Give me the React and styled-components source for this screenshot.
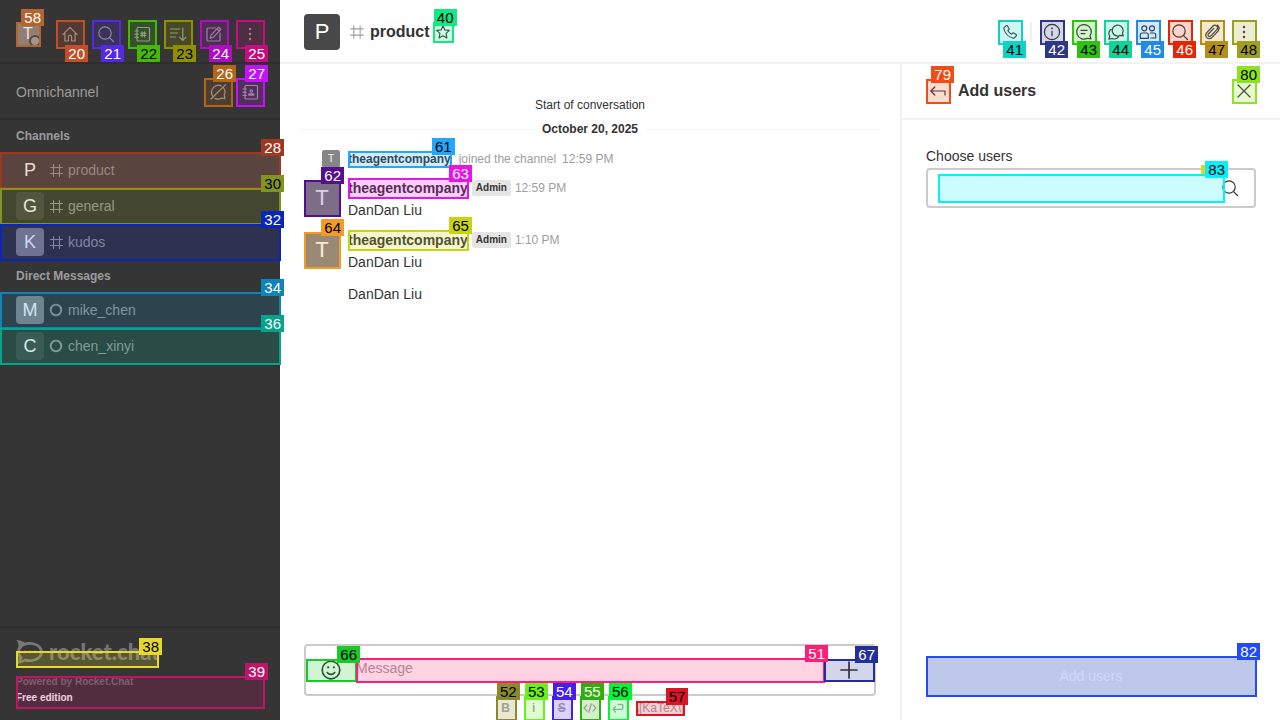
import React from "react";
import styled, { createGlobalStyle, css } from "styled-components";

const GlobalStyle = createGlobalStyle`
  *, *::before, *::after { box-sizing: border-box; }
  html, body { margin: 0; padding: 0; }
  body {
    font-family: "Liberation Sans", Arial, sans-serif;
    font-size: 14px;
    line-height: 20px;
    color: #333;
    background: #fff;
  }
  button, input, textarea { font: inherit; color: inherit; }
  h1, h2, h3, p, ul { margin: 0; padding: 0; font: inherit; }
  ul { list-style: none; }
  a { color: inherit; text-decoration: none; }
`;

/* ---------- numbered element highlights ---------- */

const Outline = styled.span`
  position: absolute;
  inset: 0 -1px -1px 0;
  border: 2px solid ${(p) => p.$color};
  pointer-events: none;
  &::before {
    content: "";
    position: absolute;
    inset: 0;
    background: ${(p) => p.$color};
    opacity: 0.2;
  }
`;

const Tag = styled.span`
  position: absolute;
  z-index: 2;
  right: -4px;
  top: ${(p) => (p.$below ? "calc(100% - 3px)" : "-13px")};
  height: 17px;
  padding: 0 3px;
  background: ${(p) => p.$color};
  color: ${(p) => (p.$dark ? "#000" : "#fff")};
  font: 400 15px/17px "Liberation Sans", Arial, sans-serif;
  white-space: nowrap;
  pointer-events: none;
`;

const MARKS = {
  58: ["#b5632f"], 20: ["#c34f2a"], 21: ["#5429e6"], 22: ["#46b80a", 1],
  23: ["#908f00", 1], 24: ["#ae0ec2"], 25: ["#c40d80"], 26: ["#b3661a"],
  27: ["#c512f8"], 28: ["#a0371f"], 30: ["#83931f", 1], 32: ["#0a26b8"],
  34: ["#1083b8"], 36: ["#04a58a"], 38: ["#e8d82c", 1], 39: ["#bf1468"],
  40: ["#10ea85", 1], 41: ["#10d2c4", 1], 42: ["#2e3784"], 43: ["#2cc311", 1],
  44: ["#10d49c", 1], 45: ["#218ae6"], 46: ["#e42606"], 47: ["#b58e1a", 1],
  48: ["#9e9e22", 1], 51: ["#fd1f77"], 52: ["#8a8a2c", 1], 53: ["#6aef1f", 1],
  54: ["#4420ea"], 55: ["#2faf0c"], 56: ["#05f531", 1], 57: ["#db1426", 1],
  61: ["#24a7fb", 1], 62: ["#560f8c"], 63: ["#e912ea"], 64: ["#f29b27", 1],
  65: ["#c7d412", 1], 66: ["#18cc28", 1], 67: ["#222f9a"], 79: ["#f04c15"],
  80: ["#8ce321", 1], 82: ["#204bfc"], 83: ["#02f2fb", 1],
};

function Mark({ n, below }) {
  const [color, dark] = MARKS[n];
  return (
    <>
      <Outline $color={color} />
      <Tag $color={color} $dark={dark} $below={below} aria-hidden="true">{n}</Tag>
    </>
  );
}

/* ---------- icons ---------- */

const Svg = styled.svg`
  display: block;
  flex: none;
  width: ${(p) => p.$size}px;
  height: ${(p) => p.$size}px;
  fill: none;
  stroke: currentColor;
  stroke-width: ${(p) => p.$weight || 1.2};
  stroke-linecap: round;
  stroke-linejoin: round;
  .solid { fill: currentColor; stroke: none; }
`;

const SHAPES = {
  home: <path d="M2.800 10.600 10 3.400l7.200 7.200M4.900 9.200V17h3.500v-4.200a1.600 1.600 0 0 1 3.200 0V17h3.500V9.200" />,
  search: <><circle cx="9" cy="9" r="6.2" /><path d="m13.6 13.6 3.9 3.9" /></>,
  directory: <><rect x="5" y="3.5" width="12.5" height="13.5" rx="1" /><path d="M3 7h3.4M3 10.2h3.4M3 13.4h3.4M10.1 7.8v5M12.5 7.8v5M8.8 9.2h5M8.8 11.4h5" /></>,
  sort: <path d="M2.4 5h9.2M2.4 9h7M2.4 13h5M14.8 4v12.4M11.8 13.4l3 3 3-3" />,
  edit: <path d="M11.5 4H4a1 1 0 0 0-1 1v11a1 1 0 0 0 1 1h11a1 1 0 0 0 1-1V9M14.6 3.2l2.4 2.2-7.8 8-3 .9.8-3.1z M13 4.8l2.4 2.3" />,
  kebab: <><circle className="solid" cx="10" cy="5" r="1.2" /><circle className="solid" cx="10" cy="10" r="1.2" /><circle className="solid" cx="10" cy="15" r="1.2" /></>,
  chatOff: <path d="M17.6 2.6 3 17M4.6 14A7 7 0 0 1 13.5 4M15.6 6a7 7 0 0 1 .6 7.2l.7 3.4-3-.6A7 7 0 0 1 7 16.4" />,
  contacts: <><rect x="5" y="3.5" width="12.5" height="13.5" rx="1" /><path d="M3 7h3.4M3 10.2h3.4M3 13.4h3.4M8.8 13.2v-1.400h5v1.400z" /><circle cx="11.3" cy="9" r="1.2" /></>,
  hash: <path d="M6.5 3v14M13.5 3v14M3 6.5h14M3 13.5h14" />,
  offline: <circle cx="10" cy="10" r="7.6" />,
  star: <path d="m10 2.2 2.300 5.200 5.700.6-4.200 3.800 1.100 5.600L10 14.600l-4.900 2.800 1.100-5.600L2 8l5.700-.6z" />,
  phone: <path d="M3.600 4.800 5.800 3c.5-.4 1-.2 1.300.3l1.800 2.900c.3.5.1 1-.3 1.300l-1 .8c.8 1.700 2.300 3.200 4.200 4.100l.8-1c.3-.4.8-.5 1.300-.3l2.900 1.700c.5.3.6.9.3 1.300l-1.800 2.200c-.4.500-.9.700-1.500.6C8.600 15.800 4.200 11.600 3.200 6.200c-.1-.5 0-1 .4-1.400z" />,
  info: <><circle cx="10" cy="10" r="7.600" /><path d="M10 9v5" /><circle className="solid" cx="10" cy="6.300" r=".9" /></>,
  thread: <><path d="M16 13.600l1 3.400-3.600-.7A7.300 7.300 0 1 1 17.300 10c0 1.300-.4 2.500-1.300 3.600z" /><path d="M7 8.400h6M7 11.600h4" /></>,
  discussion: <path d="M16.300 11.300l1 2.700-3-.6A5.500 5.500 0 1 1 17.200 8.700c0 1-.3 1.800-.9 2.600zM5 7.300a5.500 5.500 0 0 0-1.300 6.900L3 17.200l3.200-.7a5.500 5.500 0 0 0 6.300-1.600" />,
  team: <><circle cx="6.300" cy="6.300" r="2.500" /><circle cx="14" cy="6.300" r="2.500" /><path d="M2.300 16.300v-3.300c0-1.100.9-2 2-2h4c1.100 0 2 .9 2 2v3.300zM12.300 11h3.400c1.100 0 2 .9 2 2v3h-4.800" /></>,
  clip: <path d="M16.300 8.800 9.800 15.700a3.500 3.500 0 0 1-5-5L11 4a2.600 2.600 0 0 1 3.800 3.600l-6.200 6.500a1.500 1.500 0 0 1-2.200-2.100l5.400-5.700M16.300 8.800 17.400 5.800 15.500 3" />,
  back: <path d="M6.800 6 2.800 10l4 4M3 10h14v4" />,
  cross: <path d="m4 4 12 12M16 4 4 16" />,
  smile: <><circle cx="10" cy="10" r="8" /><path d="M6.600 12.300c1.700 2.300 5.100 2.300 6.800 0" /><circle className="solid" cx="7.400" cy="7.600" r="1" /><circle className="solid" cx="12.600" cy="7.600" r="1" /></>,
  plus: <path d="M10 2v16M2 10h16" />,
  code: <path d="m5.600 5.600-4 4.400 4 4.400M14.400 5.600l4 4.400-4 4.400M11.800 4 8.200 16" />,
  enter: <path d="M6.500 8.300 2.700 12l3.800 3.700M3 12h12.500a1.500 1.500 0 0 0 1.500-1.500V6.500a1.500 1.500 0 0 0-1.500-1.500H10" />,
};

function Icon({ name, size = 20, weight }) {
  return (
    <Svg viewBox="0 0 20 20" $size={size} $weight={weight} aria-hidden="true">
      {SHAPES[name]}
    </Svg>
  );
}

/* ---------- shared parts ---------- */

const IconButton = styled.button`
  position: relative;
  display: flex;
  align-items: center;
  justify-content: center;
  flex: none;
  width: ${(p) => p.$size || 24}px;
  height: ${(p) => p.$size || 24}px;
  padding: 0;
  border: 0;
  background: none;
`;

const AVATAR = {
  18: css`font-size: 10px;`,
  24: css`font-size: 16px;`,
  28: css`font-size: 18px;`,
  36: css`font-size: 22px;`,
};

const Avatar = styled.span`
  position: relative;
  display: flex;
  align-items: center;
  justify-content: center;
  flex: none;
  width: ${(p) => p.$size}px;
  height: ${(p) => p.$size}px;
  border-radius: ${(p) => (p.$square ? 0 : p.$size > 18 ? 4 : 2)}px;
  background: ${(p) => (p.$light ? "#868686" : "#484848")};
  color: #fff;
  ${(p) => AVATAR[p.$size]}
`;

/* ---------- sidebar ---------- */

const Page = styled.div`
  display: flex;
  height: 100vh;
  overflow: hidden;
`;

const Sidebar = styled.nav`
  display: flex;
  flex-direction: column;
  flex: 0 0 280px;
  background: #353535;
  color: #9c9c9c;
`;

const SidebarTop = styled.header`
  display: flex;
  align-items: center;
  justify-content: space-between;
  height: 64px;
  padding: 6px 16px 0;
  border-bottom: 2px solid #2e2e2e;
`;

const ButtonGroup = styled.div`
  display: flex;
  gap: ${(p) => p.$gap}px;
`;

const Status = styled.span`
  position: absolute;
  right: -1px;
  bottom: -1px;
  width: 12px;
  height: 12px;
  border: 2px solid #3f3f3f;
  border-radius: 50%;
  background: #a0a0a0;
`;

const Omnichannel = styled.section`
  display: flex;
  align-items: center;
  justify-content: space-between;
  height: 56px;
  padding: 2px 16px 0;
  border-bottom: 2px solid #2e2e2e;
`;

const RoomLists = styled.div`
  flex: 1;
`;

const SectionTitle = styled.h3`
  padding: 0 16px;
  font-size: 12px;
  font-weight: 700;
  line-height: 32px;
`;

const RoomLink = styled.a`
  position: relative;
  display: flex;
  align-items: center;
  height: 36px;
  padding: 0 16px;
  background: ${(p) => (p.$active ? "#484848" : "transparent")};
`;

const RoomIcon = styled.span`
  display: flex;
  justify-content: center;
  width: 24px;
`;

const SidebarFooter = styled.footer`
  display: flex;
  flex-direction: column;
  gap: 9px;
  height: 94px;
  padding: 23px 15px 0 16px;
  border-top: 2px solid #2e2e2e;
`;

const LogoLink = styled.a`
  position: relative;
  display: flex;
  align-items: flex-end;
  gap: 6px;
  width: 142px;
  height: 16px;
  padding-bottom: 3px;
  color: #777;
`;

const LogoMark = styled.svg`
  display: block;
  flex: none;
  width: 27px;
  height: 24px;
`;

const Wordmark = styled.span`
  font: 900 22px/24px Lato, "Liberation Sans", sans-serif;
`;

const Edition = styled.a`
  position: relative;
  display: flex;
  flex-direction: column;
  gap: 4px;
  width: 248px;
  height: 32px;
  font-size: 10px;
  font-weight: 700;
  line-height: 12px;
  color: #727272;
`;

const Plan = styled.span`
  color: #fff;
`;

function Rooms({ title, rooms }) {
  return (
    <section>
      <SectionTitle>{title}</SectionTitle>
      <ul>
        {rooms.map((r) => (
          <li key={r.name}>
            <RoomLink href="#" $active={r.active}>
              <Avatar $size={28} $light={r.light}>{r.name[0].toUpperCase()}</Avatar>
              <RoomIcon>
                {r.icon === "offline"
                  ? <Icon name="offline" size={14} weight={2.600} />
                  : <Icon name="hash" size={17} weight={1.300} />}
              </RoomIcon>
              {r.name}
              <Mark n={r.mark} />
            </RoomLink>
          </li>
        ))}
      </ul>
    </section>
  );
}

const CHANNELS = [
  { name: "product", icon: "hash", mark: 28, active: true },
  { name: "general", icon: "hash", mark: 30 },
  { name: "kudos", icon: "hash", mark: 32, light: true },
];
const DIRECT = [
  { name: "mike_chen", icon: "offline", mark: 34, light: true },
  { name: "chen_xinyi", icon: "offline", mark: 36 },
];
const NAV = [
  ["home", "Home", 20], ["search", "Search", 21], ["directory", "Directory", 22],
  ["sort", "Display", 23], ["edit", "Create new", 24], ["kebab", "Administration", 25],
];

/* ---------- room ---------- */

const Room = styled.main`
  display: flex;
  flex-direction: column;
  flex: 1;
  min-width: 0;
`;

const RoomHeader = styled.header`
  display: flex;
  align-items: center;
  flex: none;
  height: 64px;
  padding: 2px 24px 0;
  border-bottom: 2px solid #f2f2f2;
`;

const HeaderHash = styled.span`
  margin: 0 4px 0 8px;
  color: #9e9e9e;
`;

const RoomTitle = styled.h1`
  margin-right: 3px;
  font-size: 16px;
  font-weight: 700;
`;

const Tools = styled.div`
  display: flex;
  align-items: center;
  gap: 8px;
  margin-left: auto;
`;

const ToolDivider = styled.span`
  width: 2px;
  height: 20px;
  background: #f0f0f0;
`;

const Body = styled.div`
  display: flex;
  flex: 1;
  min-height: 0;
`;

const Conversation = styled.section`
  display: flex;
  flex-direction: column;
  flex: 1;
  min-width: 0;
`;

const MessageList = styled.div`
  flex: 1;
  padding: 32px 20px 0;
`;

const StartNote = styled.p`
  font-size: 12px;
  line-height: 18px;
  text-align: center;
`;

const DateDivider = styled.div`
  display: flex;
  align-items: center;
  gap: 8px;
  margin: 6px 0 12px;
  font-size: 12px;
  font-weight: 700;
  line-height: 18px;
  &::before, &::after {
    content: "";
    flex: 1;
    height: 1px;
    background: #f2f2f2;
  }
`;

const SystemMessage = styled.div`
  display: flex;
  align-items: center;
  padding-left: 22px;
  font-size: 12px;
  line-height: 16px;
  color: #9e9e9e;
`;

const Message = styled.article`
  display: grid;
  grid-template-columns: 36px 1fr;
  column-gap: 8px;
  margin-top: 10px;
  padding: ${(p) => (p.$sequential ? 2 : 0)}px 4px 0;
`;

const MessageAvatar = styled.div`
  height: 38px;
  padding-top: 2px;
`;

const MessageHead = styled.div`
  display: flex;
  align-items: center;
  gap: 4px;
  margin-bottom: 2px;
`;

const Author = styled.a`
  position: relative;
  font-weight: 700;
  color: #333;
  margin: ${(p) => (p.$system ? "0 8px" : "0")};
`;

const Role = styled.span`
  padding: 0 4px;
  border-radius: 2px;
  background: #e5e5e5;
  font-size: 10px;
  font-weight: 700;
  line-height: 16px;
`;

const Time = styled.time`
  font-size: 12px;
  color: #9e9e9e;
  margin-left: ${(p) => (p.$system ? 6 : 0)}px;
`;

const MessageText = styled.p`
  grid-column: 2;
`;

const ComposerArea = styled.form`
  flex: none;
  padding: 0 24px;
`;

const Composer = styled.div`
  display: flex;
  align-items: center;
  height: 52px;
  border: 2px solid #cbcbcb;
  border-radius: 4px;
`;

const ComposerButton = styled(IconButton)`
  width: 50px;
  height: 22px;
`;

const Field = styled.div`
  position: relative;
  flex: 1;
  display: flex;
  min-width: 0;
`;

const MessageInput = styled.textarea`
  flex: 1;
  height: 24px;
  min-width: 0;
  padding: 0;
  border: 0;
  outline: 0;
  resize: none;
  overflow: hidden;
  background: none;
  &::placeholder { color: #9e9e9e; opacity: 1; }
`;

const Formatting = styled.div`
  display: flex;
  align-items: center;
  justify-content: center;
  gap: 8px;
  height: 24px;
  color: #a6a6a6;
`;

const FormatButton = styled(IconButton)`
  width: 20px;
  height: 24px;
  font-size: 12px;
  font-weight: 700;
`;

const Katex = styled.a`
  position: relative;
  font-size: 12px;
  line-height: 14px;
`;

function Post({ avatarMark, nameMark, time, children }) {
  return (
    <Message>
      <MessageAvatar>
        <Avatar $size={36} $light $square>T<Mark n={avatarMark} /></Avatar>
      </MessageAvatar>
      <div>
        <MessageHead>
          <Author href="#">theagentcompany<Mark n={nameMark} /></Author>
          <Role>Admin</Role>
          <Time>{time}</Time>
        </MessageHead>
        <p>{children}</p>
      </div>
    </Message>
  );
}

const TOOLS = [
  ["info", "Channel info", 42], ["thread", "Threads", 43], ["discussion", "Discussion", 44],
  ["team", "Members", 45], ["search", "Search messages", 46], ["clip", "Files", 47],
  ["kebab", "Options", 48],
];

/* ---------- contextual panel ---------- */

const Panel = styled.aside`
  display: flex;
  flex-direction: column;
  flex: 0 0 380px;
  border-left: 2px solid #f2f2f2;
`;

const PanelHeader = styled.header`
  display: flex;
  align-items: center;
  gap: 8px;
  height: 56px;
  padding: 0 24px;
  border-bottom: 2px solid #f2f2f2;
`;

const PanelTitle = styled.h2`
  flex: 1;
  font-size: 16px;
  font-weight: 700;
`;

const PanelForm = styled.form`
  display: flex;
  flex-direction: column;
  flex: 1;
  padding: 26px 24px 24px;
`;

const Label = styled.label`
  margin-bottom: 2px;
`;

const SearchBox = styled.div`
  display: flex;
  align-items: center;
  height: 40px;
  padding: 0 14px 0 10px;
  border: 2px solid #cbcbcb;
  border-radius: 4px;
`;

const SearchIcon = styled.span`
  margin-left: -4px;
`;

const HiddenTag = styled.span`
  position: absolute;
  z-index: 1;
  top: -9px;
  right: 0;
  width: 23px;
  height: 9px;
  background: #e6d01f;
`;

const UserInput = styled.input`
  flex: 1;
  min-width: 0;
  height: 28px;
  padding: 0;
  border: 0;
  outline: 0;
  background: none;
`;

const SubmitButton = styled.button`
  position: relative;
  height: 40px;
  margin-top: auto;
  padding: 0;
  border: 0;
  background: #e7e8e6;
  color: #fcfcfa;
`;

export default function App() {
  return (
    <Page>
      <GlobalStyle />
      <Sidebar>
        <SidebarTop>
          <IconButton aria-label="User menu">
            <Avatar $size={24} $light $square>T<Status /></Avatar>
            <Mark n={58} />
          </IconButton>
          <ButtonGroup $gap={8}>
            {NAV.map(([icon, label, n]) => (
              <IconButton key={n} $size={28} aria-label={label}>
                <Icon name={icon} />
                <Mark n={n} below />
              </IconButton>
            ))}
          </ButtonGroup>
        </SidebarTop>
        <Omnichannel>
          <h3>Omnichannel</h3>
          <ButtonGroup $gap={4}>
            <IconButton $size={28} aria-label="Turn on answer chats"><Icon name="chatOff" /><Mark n={26} /></IconButton>
            <IconButton $size={28} aria-label="Contact center"><Icon name="contacts" /><Mark n={27} /></IconButton>
          </ButtonGroup>
        </Omnichannel>
        <RoomLists>
          <Rooms title="Channels" rooms={CHANNELS} />
          <Rooms title="Direct Messages" rooms={DIRECT} />
        </RoomLists>
        <SidebarFooter>
          <LogoLink href="#">
            <LogoMark viewBox="0 0 27 24" aria-hidden="true">
              <path
                fill="currentColor"
                fillRule="evenodd"
                d="M0 0c3.500 0 6.400 1 8.400 2.500C18 .2 27 5 27 12s-9 11.800-18.600 9.500C6.400 23 3.500 24 0 24c2.200-2 3-4.400 2.400-6.800C.6 14 .6 10 2.400 6.800 3 4.400 2.200 2 0 0zM14 4.800C8 4.800 4 8 4 12c0 2 1 3.600 2.400 4.800.2 1.200 0 2.300-.6 3.400l3.400-1.600C17 20.800 24 17.400 24 12c0-4-4-7.200-10-7.200z"
              />
              <circle fill="currentColor" cx="9" cy="12" r="1.400" />
              <circle fill="currentColor" cx="14" cy="12" r="1.400" />
              <circle fill="currentColor" cx="19" cy="12" r="1.400" />
            </LogoMark>
            <Wordmark>rocket.chat</Wordmark>
            <Mark n={38} />
          </LogoLink>
          <Edition href="#">
            <span>Powered by Rocket.Chat</span>
            <Plan>Free edition</Plan>
            <Mark n={39} />
          </Edition>
        </SidebarFooter>
      </Sidebar>

      <Room>
        <RoomHeader>
          <Avatar $size={36}>P</Avatar>
          <HeaderHash><Icon name="hash" size={18} weight={1.200} /></HeaderHash>
          <RoomTitle>product</RoomTitle>
          <IconButton $size={20} aria-label="Favorite"><Icon name="star" size={16} weight={1.400} /><Mark n={40} /></IconButton>
          <Tools>
            <IconButton aria-label="Call"><Icon name="phone" size={18} /><Mark n={41} below /></IconButton>
            <ToolDivider />
            {TOOLS.map(([icon, label, n]) => (
              <IconButton key={n} aria-label={label}>
                <Icon name={icon} />
                <Mark n={n} below />
              </IconButton>
            ))}
          </Tools>
        </RoomHeader>

        <Body>
          <Conversation>
            <MessageList>
              <StartNote>Start of conversation</StartNote>
              <DateDivider>October 20, 2025</DateDivider>
              <SystemMessage>
                <Avatar $size={18} $light>T</Avatar>
                <Author href="#" $system>theagentcompany<Mark n={61} /></Author>
                <span>joined the channel</span>
                <Time $system>12:59 PM</Time>
              </SystemMessage>
              <Post avatarMark={62} nameMark={63} time="12:59 PM">DanDan Liu</Post>
              <Post avatarMark={64} nameMark={65} time="1:10 PM">DanDan Liu</Post>
              <Message $sequential>
                <MessageText>DanDan Liu</MessageText>
              </Message>
            </MessageList>

            <ComposerArea>
              <Composer>
                <ComposerButton type="button" aria-label="Emoji"><Icon name="smile" size={22} weight={1.500} /><Mark n={66} /></ComposerButton>
                <Field>
                  <MessageInput aria-label="Message" placeholder="Message" rows={1} />
                  <Mark n={51} />
                </Field>
                <ComposerButton type="button" aria-label="More actions"><Icon name="plus" weight={1.700} /><Mark n={67} /></ComposerButton>
              </Composer>
              <Formatting>
                <FormatButton type="button" aria-label="Bold">B<Mark n={52} /></FormatButton>
                <FormatButton type="button" aria-label="Italic">i<Mark n={53} /></FormatButton>
                <FormatButton type="button" aria-label="Strike"><s>S</s><Mark n={54} /></FormatButton>
                <FormatButton type="button" aria-label="Inline code"><Icon name="code" size={14} weight={1.800} /><Mark n={55} /></FormatButton>
                <FormatButton type="button" aria-label="Multi line"><Icon name="enter" size={14} weight={1.800} /><Mark n={56} /></FormatButton>
                <Katex href="#">{"\\[KaTeX\\]"}<Mark n={57} /></Katex>
              </Formatting>
            </ComposerArea>
          </Conversation>

          <Panel>
            <PanelHeader>
              <IconButton aria-label="Back"><Icon name="back" /><Mark n={79} /></IconButton>
              <PanelTitle>Add users</PanelTitle>
              <IconButton aria-label="Close"><Icon name="cross" weight={1.300} /><Mark n={80} /></IconButton>
            </PanelHeader>
            <PanelForm>
              <Label htmlFor="users">Choose users</Label>
              <SearchBox>
                <Field>
                  <UserInput id="users" type="text" />
                  <HiddenTag />
                  <Mark n={83} />
                </Field>
                <SearchIcon><Icon name="search" /></SearchIcon>
              </SearchBox>
              <SubmitButton type="submit">Add users<Mark n={82} /></SubmitButton>
            </PanelForm>
          </Panel>
        </Body>
      </Room>
    </Page>
  );
}
